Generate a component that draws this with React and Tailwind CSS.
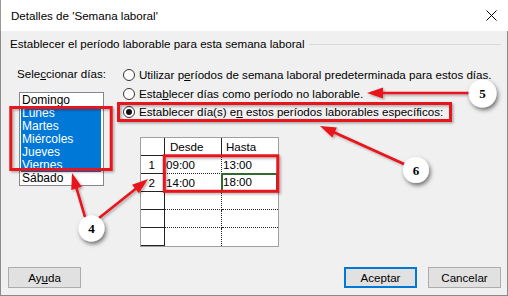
import React from 'react';

const RED = '#e8141a';

const Arrow = ({ x1, y1, x2, y2 }) => {
  const dx = x2 - x1, dy = y2 - y1, len = Math.hypot(dx, dy);
  const ux = dx / len, uy = dy / len;
  const hl = 16, hw = 5.5;
  const bx = x2 - ux * hl, by = y2 - uy * hl;
  const pts = `${x2},${y2} ${bx - uy * hw},${by + ux * hw} ${bx + uy * hw},${by - ux * hw}`;
  return (
    <g filter="url(#sh)">
      <line x1={x1} y1={y1} x2={bx + ux * 2} y2={by + uy * 2} stroke={RED} strokeWidth="2.6" />
      <polygon points={pts} fill={RED} />
    </g>
  );
};

const Badge = ({ cx, cy, r = 13, n }) => (
  <g>
    <circle cx={cx} cy={cy} r={r} fill="#fff" filter="url(#csh)" />
    <text x={cx} y={cy + 4.5} textAnchor="middle" fontFamily="Liberation Serif, serif" fontWeight="bold" fontSize="13" fill="#000">{n}</text>
  </g>
);

const Radio = ({ checked }) => (
  <span className="w-[12px] h-[12px] rounded-full border border-[#333] bg-white flex items-center justify-center shrink-0">
    {checked && <span className="w-[6px] h-[6px] rounded-full bg-[#111]" />}
  </span>
);

const Btn = ({ children, primary }) => (
  <div className={`w-[73px] h-[21px] flex items-center justify-center bg-[#e1e1e1] ${primary ? 'border-2 border-[#0078d7]' : 'border border-[#adadad]'}`}>
    {children}
  </div>
);

export default function App() {
  const days = ['Domingo', 'Lunes', 'Martes', 'Miércoles', 'Jueves', 'Viernes', 'Sábado'];
  const rows = [
    ['1', '09:00', '13:00'],
    ['2', '14:00', '18:00'],
    ['', '', ''],
    ['', '', ''],
    ['', '', ''],
  ];

  return (
    <div className="w-[508px] h-[296px] relative overflow-hidden font-['Liberation_Sans',sans-serif] text-[11.6px] text-black leading-[16px]">
      {/* title bar */}
      <div className="h-[31px] bg-white flex items-center justify-between pl-[10px] pr-[11px] border-l border-[#9a9a9a]">
        <span>Detalles de 'Semana laboral'</span>
        <svg width="11" height="11" viewBox="0 0 11 11">
          <path d="M0.5 0.5 L10.5 10.5 M10.5 0.5 L0.5 10.5" stroke="#000" strokeWidth="1" />
        </svg>
      </div>

      <div className="h-[265px] bg-[#f0f0f0] border-l border-r border-b border-[#8a8a8a] flex flex-col">
        {/* group header */}
        <div className="mt-[5px] pl-[9px] pr-[6px] flex items-center h-[16px]">
          <span>Establecer el período laborable para esta semana laboral</span>
          <div className="flex-1 h-px bg-[#d9d9d9] ml-[4px]" />
        </div>

        {/* main */}
        <div className="mt-[14px] pl-[16px] flex">
          <div className="w-[106px] flex flex-col">
            <div className="h-[16px]">Sele<u>c</u>cionar días:</div>
            <div className="mt-[10px] ml-[2px] w-[85px] h-[94px] bg-white border border-[#828790] p-px pr-[2px]">
              {days.map((d, i) => (
                <div
                  key={d}
                  className={`h-[13px] leading-[13px] pl-px text-[12px] ${i >= 1 && i <= 5 ? 'bg-[#0078d7] text-white' : ''}`}
                >
                  {d}
                </div>
              ))}
            </div>
          </div>

          <div className="flex flex-col">
            <div className="h-[18px] flex items-center gap-[4px]">
              <Radio />
              <span>Utilizar p<u>e</u>ríodos de semana laboral predeterminada para estos días.</span>
            </div>
            <div className="h-[19px] flex items-center gap-[4px]">
              <Radio />
              <span>Esta<u>b</u>lecer días como período no laborable.</span>
            </div>
            <div className="h-[18px] flex items-center gap-[4px]">
              <Radio checked />
              <span>Establecer día(s) e<u>n</u> estos períodos laborables específicos:</span>
            </div>

            {/* grid */}
            <div className="mt-[16px] ml-[17px] w-[139px] bg-white border border-[#a0a0a0]">
              <div className="flex h-[18px]">
                <div className="w-[24px] border-r border-b border-[#222]" />
                <div className="w-[57px] border-r border-b border-[#222] pl-[5px] leading-[17px]">Desde</div>
                <div className="flex-1 border-b border-[#222] pl-[4px] leading-[17px]">Hasta</div>
              </div>
              {rows.map((r, i) => {
                const last = i === rows.length - 1;
                return (
                  <div key={i} className="flex h-[18px]">
                    <div className="w-[24px] border-r border-b border-[#222] text-right pr-[9px] leading-[17px]">{r[0]}</div>
                    <div className={`w-[57px] border-r border-dotted border-[#222] pl-[1px] leading-[17px] ${last ? '' : 'border-b'}`}>{r[1]}</div>
                    {i === 1 ? (
                      <div className="flex-1 border-2 border-[#2f6b2f] leading-[14px] pl-0 -ml-px -mt-px">{r[2]}</div>
                    ) : (
                      <div className={`flex-1 pl-[1px] leading-[17px] border-dotted border-[#222] ${last ? '' : 'border-b'}`}>{r[2]}</div>
                    )}
                  </div>
                );
              })}
            </div>
          </div>
        </div>

        {/* footer */}
        <div className="mt-auto mb-[7px] pl-[7px] pr-[6px] flex items-center">
          <Btn>Ay<u>u</u>da</Btn>
          <div className="flex-1" />
          <Btn primary>Aceptar</Btn>
          <div className="w-[11px]" />
          <Btn>Cancelar</Btn>
        </div>
      </div>

      {/* annotations */}
      <svg className="absolute left-0 top-0 pointer-events-none" width="508" height="296" viewBox="0 0 508 296">
        <defs>
          <filter id="sh" x="-20%" y="-20%" width="140%" height="140%">
            <feDropShadow dx="1.5" dy="1.5" stdDeviation="0.8" floodColor="#000" floodOpacity="0.3" />
          </filter>
          <filter id="csh" x="-50%" y="-50%" width="200%" height="200%">
            <feDropShadow dx="1.5" dy="2.5" stdDeviation="2" floodColor="#000" floodOpacity="0.55" />
          </filter>
        </defs>
        <g filter="url(#sh)" fill="none" stroke={RED} strokeWidth="3">
          <rect x="10.8" y="107.5" width="100.4" height="62" />
          <rect x="118.5" y="103.5" width="332" height="17" />
          <rect x="164.3" y="155.8" width="113.5" height="35.5" />
        </g>
        <Arrow x1={85} y1={217} x2={72} y2={173} />
        <Arrow x1={99} y1={218} x2={148} y2={179} />
        <Arrow x1={470} y1={93} x2={367} y2={93} />
        <Arrow x1={404} y1={164} x2={320} y2={126} />
        <Badge cx={91.5} cy={228.5} n="4" />
        <Badge cx={482.5} cy={93.5} r={14} n="5" />
        <Badge cx={416} cy={170} n="6" />
      </svg>
    </div>
  );
}
